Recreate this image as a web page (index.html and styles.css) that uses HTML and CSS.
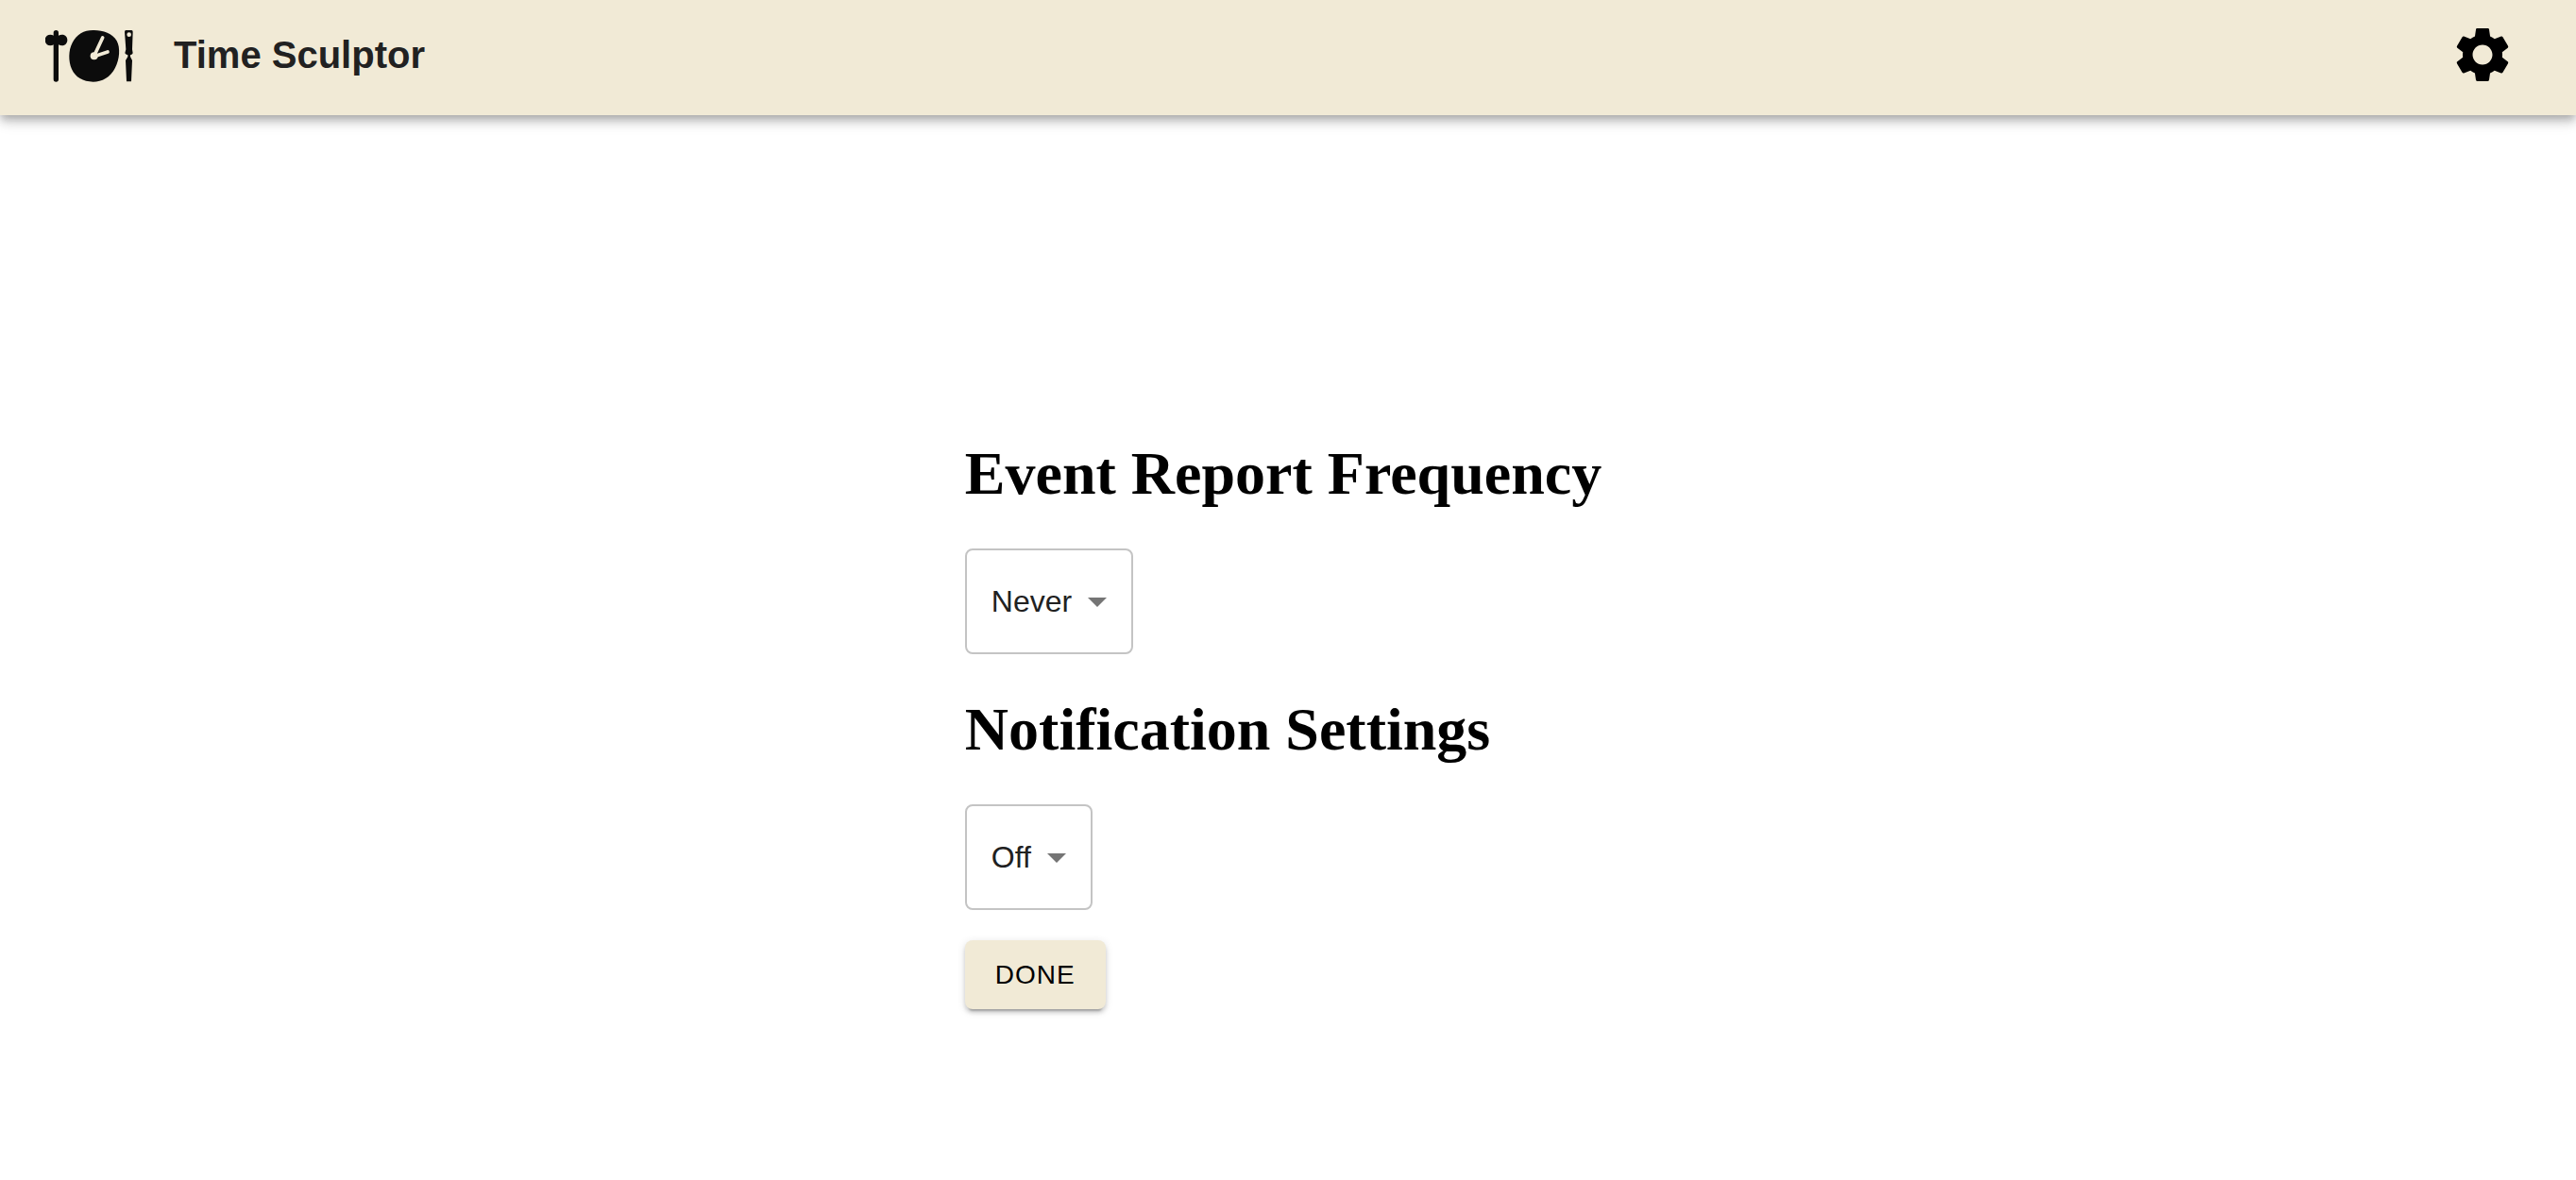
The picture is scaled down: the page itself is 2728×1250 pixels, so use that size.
FILE: index.html
```html
<!DOCTYPE html>
<html lang="en">
<head>
<meta charset="utf-8">
<meta name="viewport" content="width=device-width, initial-scale=1">
<title>Time Sculptor</title>
<link rel="stylesheet" href="styles.css">
</head>
<body>
<header class="app-bar">
  <svg class="logo" viewBox="54 57 282 174" aria-hidden="true">
    <rect x="80" y="66" width="16" height="164" rx="8"/>
    <path d="M70 80Q75 80 81 83Q88 79 96 83Q101 80 107 80C118 80 124 88 124 97C124 107 118 115 107 115Q101 115 96 112Q88 115 81 112Q75 115 70 115C59 115 53 107 53 97C53 88 59 80 70 80Z"/>
    <path d="M205 66C235 65 267 75 281 100C293 122 290 159 276 185C262 215 233 230 206 230C174 230 149 215 138 190C127 165 127 130 140 106C153 79 177 66 205 66Z"/>
    <g class="logo-hands">
      <path d="M209 148L236 90"/>
      <path d="M209 149L252 135"/>
    </g>
    <circle class="logo-cutout" cx="209" cy="148" r="12"/>
    <path d="M310 66H328Q332 66 332 71L330 127L332 139Q331 144 324 145V150L330 162L327 229H312L309 162L316 150V145Q309 144 307 139L310 127L306 71Q306 66 310 66Z"/>
    <circle class="logo-cutout" cx="320" cy="80" r="7"/>
  </svg>
  <span class="brand">Time Sculptor</span>
  <button class="settings-button" type="button" aria-label="Settings">
    <svg class="settings-icon" viewBox="0 0 24 24" aria-hidden="true"><path d="M19.14 12.94c.04-.3.06-.61.06-.94 0-.32-.02-.64-.07-.94l2.03-1.58c.18-.14.23-.41.12-.61l-1.92-3.32c-.12-.22-.37-.29-.59-.22l-2.39.96c-.5-.38-1.03-.7-1.62-.94l-.36-2.54c-.04-.24-.24-.41-.48-.41h-3.84c-.24 0-.43.17-.47.41l-.36 2.54c-.59.24-1.13.57-1.62.94l-2.39-.96c-.22-.08-.47 0-.59.22L2.74 8.87c-.12.21-.08.47.12.61l2.03 1.58c-.05.3-.09.63-.09.94s.02.64.07.94l-2.03 1.58c-.18.14-.23.41-.12.61l1.92 3.32c.12.22.37.29.59.22l2.39-.96c.5.38 1.03.7 1.62.94l.36 2.54c.05.24.24.41.48.41h3.84c.24 0 .44-.17.47-.41l.36-2.54c.59-.24 1.13-.56 1.62-.94l2.39.96c.22.08.47 0 .59-.22l1.92-3.32c.12-.22.07-.47-.12-.61l-2.01-1.58zM12 15.6c-1.98 0-3.6-1.62-3.6-3.6s1.62-3.6 3.6-3.6 3.6 1.62 3.6 3.6-1.62 3.6-3.6 3.6z"/></svg>
  </button>
</header>
<main class="page">
  <form class="settings">
    <h1 class="heading"><label for="frequency">Event Report Frequency</label></h1>
    <div class="select-field">
      <select class="select" id="frequency"><option>Never</option></select>
      <svg class="select-arrow" viewBox="0 0 24 24" aria-hidden="true"><path d="M7 10l5 5 5-5z"/></svg>
    </div>
    <h1 class="heading"><label for="notifications">Notification Settings</label></h1>
    <div class="select-field">
      <select class="select" id="notifications"><option>Off</option></select>
      <svg class="select-arrow" viewBox="0 0 24 24" aria-hidden="true"><path d="M7 10l5 5 5-5z"/></svg>
    </div>
    <button class="done-button" type="button">DONE</button>
  </form>
</main>
</body>
</html>
```
FILE: styles.css
```css
:root {
  --cream: #f1ead6;
  --ink: #212121;
  --bar-height: 122px;
  --sans: Arial, "Liberation Sans", sans-serif;
}

* {
  box-sizing: border-box;
}

body {
  margin: 0;
  background: #fff;
  color: #000;
  font-family: "Times New Roman", "Liberation Serif", serif;
}

.app-bar {
  display: flex;
  align-items: center;
  height: var(--bar-height);
  padding: 0 64px 6px 48px;
  background: var(--cream);
  box-shadow:
    0 4px 8px -2px rgba(0, 0, 0, 0.2),
    0 8px 10px 0 rgba(0, 0, 0, 0.14),
    0 2px 20px 0 rgba(0, 0, 0, 0.12);
}

.logo {
  width: 94px;
  height: 58px;
  margin-right: 42px;
  fill: #0c0c0c;
}

.logo-hands {
  fill: none;
  stroke: var(--cream);
  stroke-width: 11;
  stroke-linecap: round;
}

.logo-cutout {
  fill: var(--cream);
}

.brand {
  color: var(--ink);
  font: bold 40px/64px var(--sans);
}

.settings-button {
  display: flex;
  margin-left: auto;
  padding: 0;
  border: 0;
  background: none;
  cursor: pointer;
}

.settings-icon {
  width: 70px;
  height: 70px;
}

.page {
  display: flex;
  align-items: center;
  justify-content: center;
  min-height: calc(100vh - var(--bar-height));
  padding: 118px 10px 0 0;
}

.settings {
  display: flex;
  flex-direction: column;
  align-items: flex-start;
}

.heading {
  margin: 43px 0;
  font-size: 64px;
  line-height: 73px;
}

.select-field {
  display: grid;
  align-items: center;
}

.select-field > * {
  grid-area: 1 / 1;
}

.select {
  appearance: none;
  height: 112px;
  padding: 0 62px 0 26px;
  border: 2px solid #c4c4c4;
  border-radius: 8px;
  background: #fff;
  color: var(--ink);
  font: 32px/38px var(--sans);
}

.select-arrow {
  justify-self: end;
  width: 48px;
  height: 48px;
  margin-right: 14px;
  fill: #757575;
  pointer-events: none;
}

.done-button {
  margin-top: 32px;
  padding: 12px 32px;
  border: 0;
  border-radius: 8px;
  background: var(--cream);
  box-shadow:
    0 6px 2px -4px rgba(0, 0, 0, 0.2),
    0 4px 4px 0 rgba(0, 0, 0, 0.14),
    0 2px 10px 0 rgba(0, 0, 0, 0.12);
  color: #000;
  font: 28px/49px var(--sans);
  letter-spacing: 1px;
  cursor: pointer;
}
```
